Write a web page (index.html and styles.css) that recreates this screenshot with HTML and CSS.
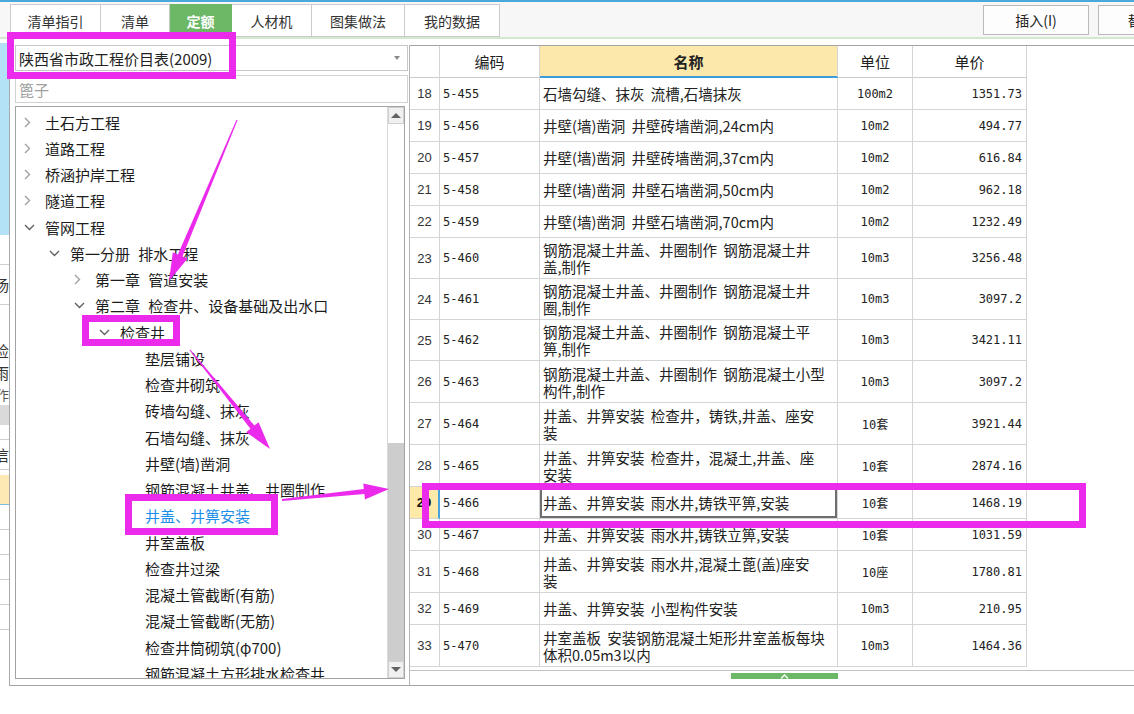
FILE: index.html
```html
<!DOCTYPE html>
<html lang="zh-CN">
<head>
<meta charset="utf-8">
<title>定额</title>
<link rel="stylesheet" href="styles.css">
</head>
<body>
<div class="topbar">
  <div class="tabs">
    <div class="tab w91">清单指引</div>
    <div class="tab w69">清单</div>
    <div class="tab w62 tab-active">定额</div>
    <div class="tab w80">人材机</div>
    <div class="tab w93">图集做法</div>
    <div class="tab w95">我的数据</div>
  </div>
  <div class="btn btn-insert">插入(I)</div>
  <div class="btn btn-replace">替换(R)</div>
</div>

<div class="main">
  <div class="edge">
    <div class="e4"></div>
    <div class="e-blue"></div>
    <div class="e30 bb"></div>
    <div class="e40 bb ech">扬</div>
    <div class="e35"></div>
    <div class="e21 ech">检</div>
    <div class="e22 ech">雨</div>
    <div class="e22 ech ech-s">作</div>
    <div class="e20 e-gray"></div>
    <div class="e15 bb"></div>
    <div class="e30 bb ech">信</div>
    <div class="e5"></div>
    <div class="e30 e-yellow"></div>
    <div class="e25 bb"></div>
    <div class="e25 bb"></div>
    <div class="e25 bb"></div>
    <div class="e25 bb"></div>
    <div class="e25 bb"></div>
  </div>

  <div class="lib">
    <div class="select"><span>陕西省市政工程价目表(2009)</span><span class="caret"></span></div>
    <div class="search">篦子</div>
    <div class="tree">
      <div class="tree-list">
        <div class="ti lv1"><span class="chev"><svg width="7" height="11" viewBox="0 0 7 11"><polyline points="1,1 5.5,5.5 1,10" fill="none" stroke="#a0a0a0" stroke-width="1.4"/></svg></span>土石方工程</div>
        <div class="ti lv1"><span class="chev"><svg width="7" height="11" viewBox="0 0 7 11"><polyline points="1,1 5.5,5.5 1,10" fill="none" stroke="#a0a0a0" stroke-width="1.4"/></svg></span>道路工程</div>
        <div class="ti lv1"><span class="chev"><svg width="7" height="11" viewBox="0 0 7 11"><polyline points="1,1 5.5,5.5 1,10" fill="none" stroke="#a0a0a0" stroke-width="1.4"/></svg></span>桥涵护岸工程</div>
        <div class="ti lv1"><span class="chev"><svg width="7" height="11" viewBox="0 0 7 11"><polyline points="1,1 5.5,5.5 1,10" fill="none" stroke="#a0a0a0" stroke-width="1.4"/></svg></span>隧道工程</div>
        <div class="ti lv1"><span class="chev"><svg width="11" height="7" viewBox="0 0 11 7"><polyline points="1,1 5.5,5.5 10,1" fill="none" stroke="#606060" stroke-width="1.4"/></svg></span>管网工程</div>
        <div class="ti lv2"><span class="chev"><svg width="11" height="7" viewBox="0 0 11 7"><polyline points="1,1 5.5,5.5 10,1" fill="none" stroke="#606060" stroke-width="1.4"/></svg></span>第一分册 排水工程</div>
        <div class="ti lv3"><span class="chev"><svg width="7" height="11" viewBox="0 0 7 11"><polyline points="1,1 5.5,5.5 1,10" fill="none" stroke="#a0a0a0" stroke-width="1.4"/></svg></span>第一章 管道安装</div>
        <div class="ti lv3"><span class="chev"><svg width="11" height="7" viewBox="0 0 11 7"><polyline points="1,1 5.5,5.5 10,1" fill="none" stroke="#606060" stroke-width="1.4"/></svg></span>第二章 检查井、设备基础及出水口</div>
        <div class="ti lv4"><span class="chev"><svg width="11" height="7" viewBox="0 0 11 7"><polyline points="1,1 5.5,5.5 10,1" fill="none" stroke="#606060" stroke-width="1.4"/></svg></span>检查井</div>
        <div class="ti lv5">垫层铺设</div>
        <div class="ti lv5">检查井砌筑</div>
        <div class="ti lv5">砖墙勾缝、抹灰</div>
        <div class="ti lv5">石墙勾缝、抹灰</div>
        <div class="ti lv5">井壁(墙)凿洞</div>
        <div class="ti lv5">钢筋混凝土井盖、井圈制作</div>
        <div class="ti lv5 ti-sel">井盖、井箅安装</div>
        <div class="ti lv5">井室盖板</div>
        <div class="ti lv5">检查井过梁</div>
        <div class="ti lv5">混凝土管截断(有筋)</div>
        <div class="ti lv5">混凝土管截断(无筋)</div>
        <div class="ti lv5">检查井筒砌筑(φ700)</div>
        <div class="ti lv5">钢筋混凝土方形排水检查井</div>
      </div>
      <div class="vscroll">
        <div class="sb-btn"><span class="tri-up"></span></div>
        <div class="sb-track"><div class="sb-thumb"></div></div>
        <div class="sb-btn"><span class="tri-down"></span></div>
      </div>
    </div>
  </div>

  <div class="grid">
    <div class="tr thead">
      <div class="c"></div>
      <div class="c ctr">编码</div>
      <div class="c ctr th-name">名称</div>
      <div class="c ctr">单位</div>
      <div class="c ctr">单价</div>
    </div>
    <div class="tr"><div class="c num">18</div><div class="c mono">5-455</div><div class="c name">石墙勾缝、抹灰 流槽,石墙抹灰</div><div class="c ctr mono">100m2</div><div class="c rt mono">1351.73</div></div>
    <div class="tr"><div class="c num">19</div><div class="c mono">5-456</div><div class="c name">井壁(墙)凿洞 井壁砖墙凿洞,24cm内</div><div class="c ctr mono">10m2</div><div class="c rt mono">494.77</div></div>
    <div class="tr"><div class="c num">20</div><div class="c mono">5-457</div><div class="c name">井壁(墙)凿洞 井壁砖墙凿洞,37cm内</div><div class="c ctr mono">10m2</div><div class="c rt mono">616.84</div></div>
    <div class="tr"><div class="c num">21</div><div class="c mono">5-458</div><div class="c name">井壁(墙)凿洞 井壁石墙凿洞,50cm内</div><div class="c ctr mono">10m2</div><div class="c rt mono">962.18</div></div>
    <div class="tr"><div class="c num">22</div><div class="c mono">5-459</div><div class="c name">井壁(墙)凿洞 井壁石墙凿洞,70cm内</div><div class="c ctr mono">10m2</div><div class="c rt mono">1232.49</div></div>
    <div class="tr h41"><div class="c num">23</div><div class="c mono">5-460</div><div class="c name"><span class="two">钢筋混凝土井盖、井圈制作 钢筋混凝土井<br>盖,制作</span></div><div class="c ctr mono">10m3</div><div class="c rt mono">3256.48</div></div>
    <div class="tr h41"><div class="c num">24</div><div class="c mono">5-461</div><div class="c name"><span class="two">钢筋混凝土井盖、井圈制作 钢筋混凝土井<br>圈,制作</span></div><div class="c ctr mono">10m3</div><div class="c rt mono">3097.2</div></div>
    <div class="tr h41"><div class="c num">25</div><div class="c mono">5-462</div><div class="c name"><span class="two">钢筋混凝土井盖、井圈制作 钢筋混凝土平<br>箅,制作</span></div><div class="c ctr mono">10m3</div><div class="c rt mono">3421.11</div></div>
    <div class="tr h42"><div class="c num">26</div><div class="c mono">5-463</div><div class="c name"><span class="two">钢筋混凝土井盖、井圈制作 钢筋混凝土小型<br>构件,制作</span></div><div class="c ctr mono">10m3</div><div class="c rt mono">3097.2</div></div>
    <div class="tr h42"><div class="c num">27</div><div class="c mono">5-464</div><div class="c name"><span class="two">井盖、井箅安装 检查井，铸铁,井盖、座安<br>装</span></div><div class="c ctr mono">10套</div><div class="c rt mono">3921.44</div></div>
    <div class="tr h42"><div class="c num">28</div><div class="c mono">5-465</div><div class="c name"><span class="two">井盖、井箅安装 检查井，混凝土,井盖、座<br>安装</span></div><div class="c ctr mono">10套</div><div class="c rt mono">2874.16</div></div>
    <div class="tr sel"><div class="c num">29</div><div class="c mono">5-466</div><div class="c name">井盖、井箅安装 雨水井,铸铁平箅,安装</div><div class="c ctr mono">10套</div><div class="c rt mono">1468.19</div></div>
    <div class="tr"><div class="c num">30</div><div class="c mono">5-467</div><div class="c name">井盖、井箅安装 雨水井,铸铁立箅,安装</div><div class="c ctr mono">10套</div><div class="c rt mono">1031.59</div></div>
    <div class="tr h42"><div class="c num">31</div><div class="c mono">5-468</div><div class="c name"><span class="two">井盖、井箅安装 雨水井,混凝土蓖(盖)座安<br>装</span></div><div class="c ctr mono">10座</div><div class="c rt mono">1780.81</div></div>
    <div class="tr"><div class="c num">32</div><div class="c mono">5-469</div><div class="c name">井盖、井箅安装 小型构件安装</div><div class="c ctr mono">10m3</div><div class="c rt mono">210.95</div></div>
    <div class="tr h42"><div class="c num">33</div><div class="c mono">5-470</div><div class="c name"><span class="two">井室盖板 安装钢筋混凝土矩形井室盖板每块<br>体积0.05m3以内</span></div><div class="c ctr mono">10m3</div><div class="c rt mono">1464.36</div></div>
    <div class="hbar">
      <div class="hbar-line">
        <div class="hthumb"><svg width="9" height="5" viewBox="0 0 9 5"><polyline points="1,4.5 4.5,1 8,4.5" fill="none" stroke="#ffffff" stroke-width="1.3"/></svg></div>
      </div>
    </div>
  </div>
</div>

<div class="mark mark-a"></div>
<div class="mark mark-b"></div>
<div class="mark mark-c"></div>
<div class="mark mark-d"></div>

<svg class="arrows" width="1134" height="714" viewBox="0 0 1134 714">
  <polygon points="237.5,120.2 182.5,256.4 187.6,258.5 169,281 172.8,252.3 177.9,254.4 236.5,119.8"/>
  <polygon points="190.4,349.7 254.35,425.6 258.6,422.2 270,449 246.2,432.2 250.45,428.8 189.6,350.3"/>
  <polygon points="282.1,501 364.4,494.1 364.9,499.6 389,489 363.3,483.6 363.8,489.1 281.9,499"/>
</svg>
</body>
</html>
```

FILE: styles.css
```css
* { box-sizing: border-box; }
html, body { margin: 0; padding: 0; }
body {
  width: 1134px;
  height: 714px;
  overflow: hidden;
  position: relative;
  background: #ffffff;
  color: #222222;
  font-family: "Noto Sans CJK SC", "Noto Sans", sans-serif;
}

/* ---------- top tab bar ---------- */
.topbar {
  display: flex;
  align-items: flex-start;
  height: 39px;
  border-top: 2px solid #4aa8dc;
  border-bottom: 2px solid #d3e8cc;
  background: #f7f7f7;
  overflow: hidden;
}
.tabs { display: flex; margin: 2px 0 0 10px; }
.tab {
  height: 33px;
  display: flex;
  align-items: center;
  justify-content: center;
  border: 1px solid #cbcbcb;
  border-left: none;
  background: #ffffff;
  font-size: 14px;
  color: #333333;
}
.tab:first-child { border-left: 1px solid #cbcbcb; }
.tab-active { background: #6cb867; border-color: #6cb867; color: #ffffff; font-weight: bold; }
.w91 { width: 91px; }
.w69 { width: 69px; }
.w62 { width: 62px; }
.w80 { width: 80px; }
.w93 { width: 93px; }
.w95 { width: 95px; }
.btn {
  flex-shrink: 0;
  width: 106px;
  height: 30px;
  margin-top: 3px;
  border: 1px solid #b9b9b9;
  background: #fdfdfd;
  font-size: 14px;
  display: flex;
  align-items: center;
  justify-content: center;
  color: #222222;
}
.btn-insert { margin-left: auto; margin-right: 9px; }
.btn-replace { margin-right: -70px; }

/* ---------- main ---------- */
.main { display: flex; height: 675px; }

.edge {
  width: 10px;
  height: 647px;
  flex-shrink: 0;
  border-right: 1px solid #a9a9a9;
  display: flex;
  flex-direction: column;
  overflow: hidden;
}
.edge > div { flex-shrink: 0; }
.e4 { height: 4px; }
.e5 { height: 5px; }
.e15 { height: 15px; }
.e20 { height: 20px; }
.e21 { height: 21px; }
.e22 { height: 22px; }
.e25 { height: 25px; }
.e30 { height: 30px; }
.e35 { height: 35px; }
.e40 { height: 40px; }
.e-blue { height: 192px; background: #b3e2f6; }
.e-gray { background: #dadada; }
.e-yellow { background: #fde9b3; border-bottom: 1px solid #7db9e0; }
.bb { border-bottom: 1px solid #cfcfcf; }
.ech {
  display: flex;
  align-items: center;
  justify-content: flex-end;
  overflow: hidden;
  font-size: 15px;
  color: #333333;
  white-space: nowrap;
}
.ech-s { font-size: 13px; color: #555555; }

/* ---------- library panel ---------- */
.lib {
  width: 399px;
  height: 647px;
  flex-shrink: 0;
  padding: 6px 0 0 5px;
  border-bottom: 1px solid #a4a4a4;
}
.select {
  width: 393px;
  height: 26px;
  border: 1px solid #c6c6c6;
  display: flex;
  align-items: center;
  justify-content: space-between;
  padding: 0 7px 0 3px;
  font-size: 15px;
  line-height: 1;
  background: #ffffff;
}
.caret {
  width: 0;
  height: 0;
  border-left: 3.5px solid transparent;
  border-right: 3.5px solid transparent;
  border-top: 4px solid #8a8a8a;
}
.search {
  width: 393px;
  height: 28px;
  margin-top: 4px;
  border: 1px solid #d2d2d2;
  display: flex;
  align-items: center;
  padding-left: 3px;
  font-size: 15px;
  color: #a0a0a0;
}
.tree {
  width: 390px;
  height: 573px;
  margin-top: 3px;
  border: 1px solid #a3a3a3;
  display: flex;
  overflow: hidden;
}
.tree-list {
  flex: 1;
  padding-top: 2px;
  overflow: hidden;
  font-size: 15px;
  color: #1c1c1c;
  word-spacing: 5px;
}
.ti { height: 26.25px; display: flex; align-items: center; white-space: nowrap; }
.chev { width: 21px; flex-shrink: 0; display: flex; align-items: center; }
.lv1 { padding-left: 8px; }
.lv2 { padding-left: 33px; }
.lv3 { padding-left: 58px; }
.lv4 { padding-left: 83px; }
.lv5 { padding-left: 129px; }
.ti-sel { color: #1e8fe8; }

.vscroll {
  width: 17px;
  flex-shrink: 0;
  border-left: 1px solid #dadada;
  display: flex;
  flex-direction: column;
}
.sb-btn {
  height: 17px;
  flex-shrink: 0;
  display: flex;
  align-items: center;
  justify-content: center;
  background: #f0f0f0;
  border: 1px solid #d0d0d0;
}
.tri-up { width: 0; height: 0; border-left: 5px solid transparent; border-right: 5px solid transparent; border-bottom: 5px solid #626262; }
.tri-down { width: 0; height: 0; border-left: 5px solid transparent; border-right: 5px solid transparent; border-top: 5px solid #626262; }
.sb-track { flex: 1; display: flex; flex-direction: column; justify-content: flex-end; background: #ffffff; }
.sb-thumb { height: 218px; background: #cdcdcd; }

/* ---------- grid ---------- */
.grid {
  flex: 1;
  height: 641px;
  margin-top: 6px;
  border-top: 1px solid #a4a4a4;
  border-left: 1px solid #b4b4b4;
  border-bottom: 1px solid #a4a4a4;
  overflow: hidden;
}
.tr {
  display: grid;
  grid-template-columns: 30px 100px 298px 75px 114px;
  height: 32px;
}
.tr.h41 { height: 41px; }
.tr.h42 { height: 42px; }
.c {
  border-right: 1px solid #d5d5d5;
  border-bottom: 1px solid #d5d5d5;
  display: flex;
  align-items: center;
  padding: 0 3px;
  font-size: 14.5px;
  white-space: nowrap;
  color: #222222;
}
.ctr { justify-content: center; }
.rt { justify-content: flex-end; padding-right: 4px; }
.num { justify-content: center; font-family: "Liberation Sans", sans-serif; font-size: 13px; color: #333333; }
.mono { font-family: "DejaVu Sans Mono", "Noto Sans CJK SC", monospace; font-size: 12px; }
.name { word-spacing: 3px; }
.two { display: block; line-height: 17px; }

.thead .c { font-size: 15px; border-bottom-color: #cccccc; }
.thead .th-name { background: #fce8ab; border-bottom: 2px solid #3d9bd7; font-weight: bold; }

.sel .num { background: #fde9a8; font-weight: bold; color: #111111; border-right: 2px solid #4aa3df; }
.sel .name { box-shadow: inset 0 0 0 2px #6e6e6e; }

.hbar { height: 18px; padding-top: 3px; }
.hbar-line { height: 15px; border-top: 1px solid #c2c2c2; }
.hthumb {
  width: 107px;
  height: 6px;
  margin: 2px 0 0 321px;
  background: #6cb867;
  display: flex;
  justify-content: center;
  align-items: center;
}

/* ---------- annotations ---------- */
.mark { position: absolute; border: 7px solid #ec2aec; }
.mark-a { left: 7px; top: 32px; width: 229px; height: 47px; }
.mark-b { left: 82px; top: 315px; width: 98px; height: 31px; }
.mark-c { left: 125px; top: 494px; width: 153px; height: 41px; }
.mark-d { left: 422px; top: 483px; width: 664px; height: 45px; }
.arrows { position: absolute; left: 0; top: 0; pointer-events: none; }
.arrows polygon { fill: #ec2aec; }
```
